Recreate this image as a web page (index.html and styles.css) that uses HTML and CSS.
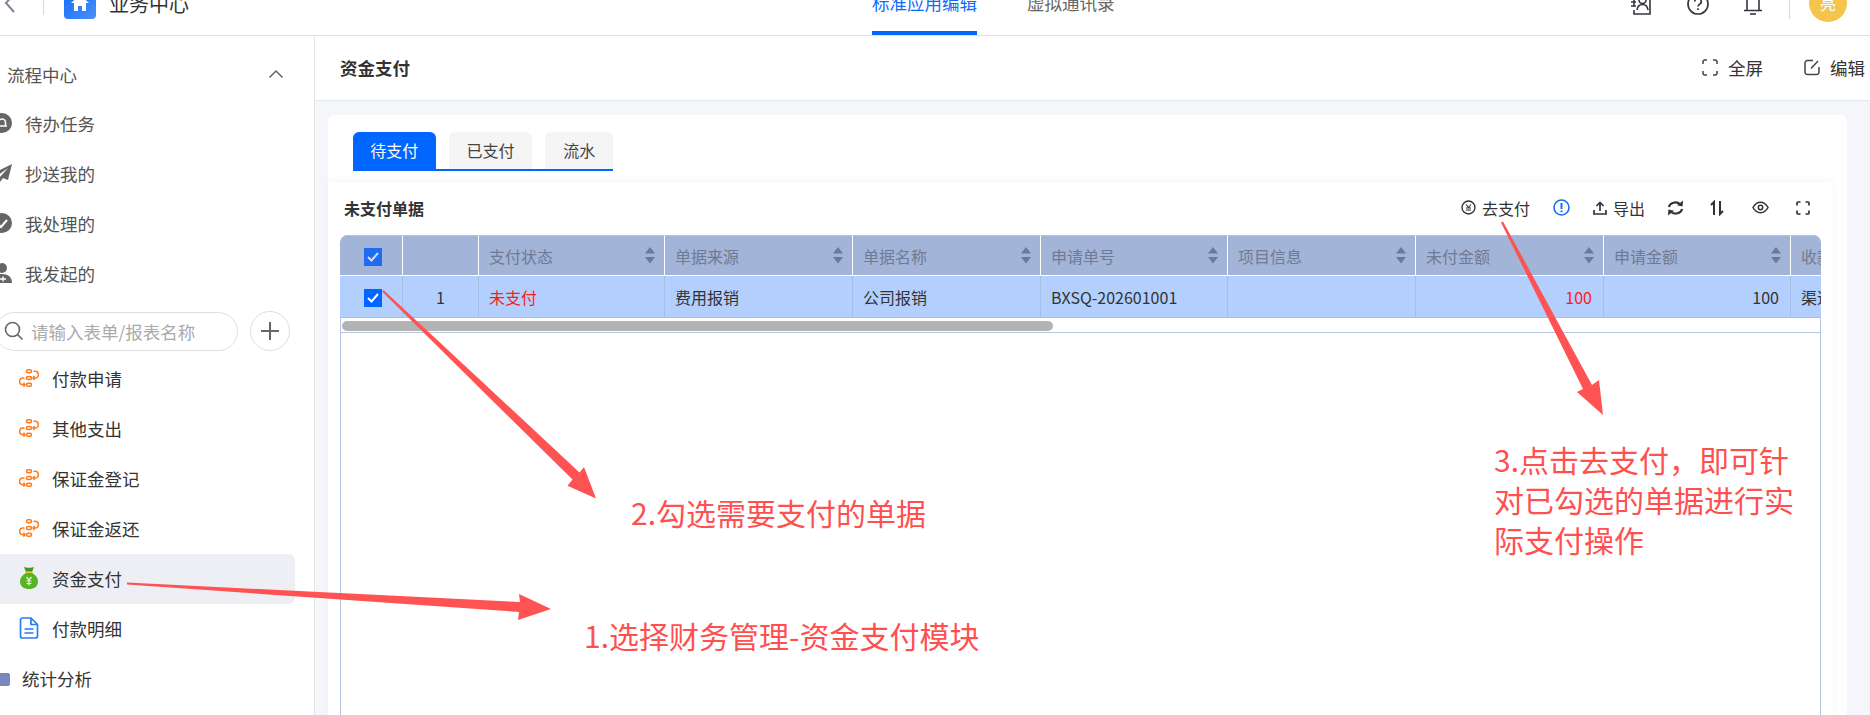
FILE: index.html
```html
<!DOCTYPE html>
<html lang="zh-CN">
<head>
<meta charset="utf-8">
<title>业务中心</title>
<link rel="stylesheet" href="styles.css">
</head>
<body>
<div class="app">
  <header class="topbar">
    <div class="topbar-inner">
      <div class="brand">
        <svg class="back" width="12" height="22" viewBox="0 0 12 22"><path d="M10 2 2 11l8 9" fill="none" stroke="#7d8694" stroke-width="2"/></svg>
        <span class="vline"></span>
        <span class="logo"><svg width="20" height="20" viewBox="0 0 20 20"><path d="M10 2 1 10h3v8h4v-5h4v5h4v-8h3z" fill="#fff"/></svg></span>
        <span class="appname">业务中心</span>
      </div>
      <nav class="toptabs">
        <a class="ttab on">标准应用编辑</a>
        <a class="ttab">虚拟通讯录</a>
      </nav>
      <div class="topright">
        <svg class="ticon" width="22" height="26" viewBox="0 0 22 26" fill="none" stroke="#33373d" stroke-width="1.6"><path d="M4 2h16v22H4v-4M4 6v10"/><path d="M1 8h5M1 12h5M1 16h5"/><circle cx="12.5" cy="10" r="3.5"/><path d="M7 20c.5-4 3-5.5 5.500-5.500s5 1.500 5.500 5.500"/></svg>
        <svg class="ticon q" width="22" height="22" viewBox="0 0 22 22" fill="none" stroke="#33373d" stroke-width="1.7"><circle cx="11" cy="11" r="10"/><path d="M7.800 8.500a3.200 3.200 0 1 1 4.800 2.700c-1 .6-1.600 1.200-1.600 2.400"/><path d="M11 15.200v1.800"/></svg>
        <svg class="ticon bell" width="20" height="24" viewBox="0 0 20 24" fill="none" stroke="#33373d" stroke-width="1.600"><path d="M4 18V8a6 6 0 0 1 12 0v10M1 18.500h18"/><path d="M7 22h6"/></svg>
        <span class="vline right"></span>
        <span class="avatar">亮</span>
      </div>
    </div>
  </header>
  <div class="body">
    <aside class="sidebar">
      <div class="side-inner">
        <div class="side-head"><span>流程中心</span>
          <svg width="16" height="10" viewBox="0 0 16 10"><path d="M1.500 8.500 8 2l6.500 6.500" fill="none" stroke="#666" stroke-width="1.500"/></svg>
        </div>
        <div class="side-row"><svg width="20" height="20" viewBox="0 0 20 20"><circle cx="10" cy="10" r="10" fill="#666"/><path d="M5 13h10M6.500 13V9.500a3.500 3.500 0 0 1 7 0V13" fill="none" stroke="#fff" stroke-width="1.600"/></svg><span>待办任务</span></div>
        <div class="side-row"><svg width="20" height="20" viewBox="0 0 20 20"><path d="M20 1 0 11l5 2 11-8-8 9v5l3-4 5 2z" fill="#666"/></svg><span>抄送我的</span></div>
        <div class="side-row"><svg width="20" height="20" viewBox="0 0 20 20"><circle cx="10" cy="10" r="10" fill="#666"/><path d="M6 11l3 3 6-7" fill="none" stroke="#fff" stroke-width="2"/></svg><span>我处理的</span></div>
        <div class="side-row"><svg width="20" height="20" viewBox="0 0 20 20"><circle cx="10" cy="5" r="5" fill="#666"/><path d="M0 20c0-6 4-9 10-9s10 3 10 9z" fill="#666"/><path d="M8 16h6M11 13.500v5" stroke="#fff" stroke-width="1.400"/></svg><span>我发起的</span></div>
        <div class="search-row">
          <div class="search">
            <svg width="20" height="20" viewBox="0 0 20 20" fill="none" stroke="#666" stroke-width="1.600"><circle cx="8.500" cy="8.500" r="7"/><path d="m13.500 13.500 5 5"/></svg>
            <span>请输入表单/报表名称</span>
          </div>
          <div class="plus"><svg width="20" height="20" viewBox="0 0 20 20"><path d="M10 1v18M1 10h18" stroke="#666" stroke-width="2"/></svg></div>
        </div>
        <div class="menu">
          <div class="item"><svg class="flow" width="20" height="18" viewBox="0 0 20 18"><rect x="7.500" y=".8" width="5" height="3" rx="1.500"/><rect x="7.500" y="7.500" width="5" height="3" rx="1.500"/><rect x="7.500" y="14.200" width="5" height="3" rx="1.500"/><path d="M14.500 2.300h1.500a3.300 3.300 0 0 1 0 6.700h-1.500M15.500 7l-1.500 2 1.500 2"/><path d="M5.500 9H4a3.300 3.300 0 0 0 0 6.700h1.500M4.500 13.700l1.500 2-1.500 2"/></svg><span>付款申请</span></div>
          <div class="item"><svg class="flow" width="20" height="18" viewBox="0 0 20 18"><rect x="7.500" y=".8" width="5" height="3" rx="1.500"/><rect x="7.500" y="7.500" width="5" height="3" rx="1.500"/><rect x="7.500" y="14.200" width="5" height="3" rx="1.500"/><path d="M14.500 2.300h1.500a3.300 3.300 0 0 1 0 6.700h-1.500M15.500 7l-1.500 2 1.500 2"/><path d="M5.500 9H4a3.300 3.300 0 0 0 0 6.700h1.500M4.500 13.700l1.500 2-1.500 2"/></svg><span>其他支出</span></div>
          <div class="item"><svg class="flow" width="20" height="18" viewBox="0 0 20 18"><rect x="7.500" y=".8" width="5" height="3" rx="1.500"/><rect x="7.500" y="7.500" width="5" height="3" rx="1.500"/><rect x="7.500" y="14.200" width="5" height="3" rx="1.500"/><path d="M14.500 2.300h1.500a3.300 3.300 0 0 1 0 6.700h-1.500M15.500 7l-1.500 2 1.500 2"/><path d="M5.500 9H4a3.300 3.300 0 0 0 0 6.700h1.500M4.500 13.700l1.500 2-1.500 2"/></svg><span>保证金登记</span></div>
          <div class="item"><svg class="flow" width="20" height="18" viewBox="0 0 20 18"><rect x="7.500" y=".8" width="5" height="3" rx="1.500"/><rect x="7.500" y="7.500" width="5" height="3" rx="1.500"/><rect x="7.500" y="14.200" width="5" height="3" rx="1.500"/><path d="M14.500 2.300h1.500a3.300 3.300 0 0 1 0 6.700h-1.500M15.500 7l-1.500 2 1.500 2"/><path d="M5.500 9H4a3.300 3.300 0 0 0 0 6.700h1.500M4.500 13.700l1.500 2-1.500 2"/></svg><span>保证金返还</span></div>
          <div class="item active"><svg width="20" height="22" viewBox="0 0 20 22"><path d="M5 0c2 1 8 1 10 0l-2 5H7z" fill="#3f9a1d"/><rect x="6" y="4.500" width="8" height="1.800" fill="#e6c94a"/><path d="M7 6h6c4 2 6 5 6 8.500 0 5-4 7.500-9 7.500s-9-2.500-9-7.500C1 11 3 8 7 6z" fill="#56b423"/><path d="M7.500 10 10 13l2.500-3M7.500 14h5M7.500 16.500h5M10 13v5.500" fill="none" stroke="#e8f6d8" stroke-width="1.200"/></svg><span>资金支付</span></div>
          <div class="item"><svg width="20" height="22" viewBox="0 0 20 22" fill="none" stroke="#2b7bf2" stroke-width="1.700"><path d="M3.500 1H12l6.500 6.500V19a2 2 0 0 1-2 2h-13a2 2 0 0 1-2-2V3a2 2 0 0 1 2-2z"/><path d="M12 1v6.500h6.500M5.500 12h9M5.500 16h9"/></svg><span>付款明细</span></div>
        </div>
        <div class="side-foot"><svg width="20" height="16" viewBox="0 0 20 16"><path d="M2 1h6l2 2h8a2 2 0 0 1 2 2v9a2 2 0 0 1-2 2H2a2 2 0 0 1-2-2V3a2 2 0 0 1 2-2z" fill="#7688bd"/></svg><span>统计分析</span></div>
      </div>
    </aside>
    <main class="main">
      <div class="page-head">
        <h1>资金支付</h1>
        <div class="page-actions">
          <span class="act"><svg width="16" height="17" viewBox="0 0 16 17" fill="none" stroke="#444" stroke-width="1.500"><path d="M1 5V3a2 2 0 0 1 2-2h2M11 1h2a2 2 0 0 1 2 2v2M15 12v2a2 2 0 0 1-2 2h-2M5 16H3a2 2 0 0 1-2-2v-2"/></svg>全屏</span>
          <span class="act"><svg width="16" height="17" viewBox="0 0 16 17" fill="none" stroke="#444" stroke-width="1.500"><path d="M9 1.500H3.500a2.500 2.500 0 0 0-2.500 2.500v9a2.500 2.500 0 0 0 2.500 2.500h9a2.500 2.500 0 0 0 2.500-2.500V8"/><path d="m7 9.500 7-7.500"/></svg>编辑</span>
        </div>
      </div>
      <section class="panel">
        <div class="tabs">
          <a class="tab on">待支付</a>
          <a class="tab">已支付</a>
          <a class="tab">流水</a>
        </div>
        <div class="card">
          <div class="toolbar">
            <h2>未支付单据</h2>
            <div class="tools">
              <span class="tool"><svg width="15" height="15" viewBox="0 0 15 15" fill="none" stroke="#333" stroke-width="1.400"><circle cx="7.500" cy="7.500" r="6.500"/><path d="M5 4.500l2.500 3 2.500-3M5 8h5M5 10h5" stroke-width="1.100"/></svg>去支付</span>
              <svg width="17" height="17" viewBox="0 0 17 17" fill="none" stroke="#1a6ff0" stroke-width="1.600"><circle cx="8.500" cy="8.500" r="7.500"/><path d="M8.500 4v6M8.500 11.500v1.800" stroke-width="2"/></svg>
              <span class="tool"><svg width="14" height="14" viewBox="0 0 14 14" fill="none" stroke="#333" stroke-width="1.700"><path d="M7 10V1.500M3.500 5 7 1.500 10.500 5M1 9v4h12V9"/></svg>导出</span>
              <svg class="t-ref" width="17" height="16" viewBox="0 0 18 16" fill="none" stroke="#333" stroke-width="2.200"><path d="M2 7a7 6 0 0 1 12-3M16 9a7 6 0 0 1-12 3"/><path d="m17 0-.5 6.500-6-1.500zM1 16l.5-6.500 6 1.500z" fill="#333" stroke="none"/></svg>
              <svg class="t-sort" width="14" height="16" viewBox="0 0 14 16" fill="none" stroke="#333" stroke-width="2"><path d="M4 15V2L1 5M10 1v13l3-3"/></svg>
              <svg class="t-eye" width="17" height="13" viewBox="0 0 18 13" fill="none" stroke="#333" stroke-width="1.600"><path d="M1 6.500C3 3 5.500 1 9 1s6 2 8 5.500C15 10 12.500 12 9 12S3 10 1 6.500z"/><circle cx="9" cy="6.500" r="2.300"/></svg>
              <svg class="t-full" width="14" height="14" viewBox="0 0 14 14" fill="none" stroke="#333" stroke-width="1.700"><path d="M1 4.500V2a1 1 0 0 1 1-1h2.500M9.500 1H12a1 1 0 0 1 1 1v2.500M13 9.500V12a1 1 0 0 1-1 1H9.500M4.500 13H2a1 1 0 0 1-1-1V9.500"/></svg>
            </div>
          </div>
          <div class="grid-wrap">
            <div class="grid">
              <div class="hc center chk"><span class="cb dim"><svg width="14" height="12" viewBox="0 0 14 12"><path d="m2 6 3.500 3.500L12 2" fill="none" stroke="#cfdcff" stroke-width="2"/></svg></span></div>
              <div class="hc"></div>
              <div class="hc"><span>支付状态</span><svg class="sort" width="10" height="17" viewBox="0 0 10 17"><path d="M5 0l5 6.500H0zM0 10h10l-5 6.500z"/></svg></div>
              <div class="hc"><span>单据来源</span><svg class="sort" width="10" height="17" viewBox="0 0 10 17"><path d="M5 0l5 6.500H0zM0 10h10l-5 6.500z"/></svg></div>
              <div class="hc"><span>单据名称</span><svg class="sort" width="10" height="17" viewBox="0 0 10 17"><path d="M5 0l5 6.500H0zM0 10h10l-5 6.500z"/></svg></div>
              <div class="hc"><span>申请单号</span><svg class="sort" width="10" height="17" viewBox="0 0 10 17"><path d="M5 0l5 6.500H0zM0 10h10l-5 6.500z"/></svg></div>
              <div class="hc"><span>项目信息</span><svg class="sort" width="10" height="17" viewBox="0 0 10 17"><path d="M5 0l5 6.500H0zM0 10h10l-5 6.500z"/></svg></div>
              <div class="hc"><span>未付金额</span><svg class="sort" width="10" height="17" viewBox="0 0 10 17"><path d="M5 0l5 6.500H0zM0 10h10l-5 6.500z"/></svg></div>
              <div class="hc"><span>申请金额</span><svg class="sort" width="10" height="17" viewBox="0 0 10 17"><path d="M5 0l5 6.500H0zM0 10h10l-5 6.500z"/></svg></div>
              <div class="hc"><span>收款</span></div>

              <div class="dc center chk"><span class="cb"><svg width="14" height="12" viewBox="0 0 14 12"><path d="m2 6 3.500 3.500L12 2" fill="none" stroke="#fff" stroke-width="2"/></svg></span></div>
              <div class="dc center">1</div>
              <div class="dc red">未支付</div>
              <div class="dc">费用报销</div>
              <div class="dc">公司报销</div>
              <div class="dc">BXSQ-202601001</div>
              <div class="dc"></div>
              <div class="dc num red">100</div>
              <div class="dc num">100</div>
              <div class="dc">渠道</div>
            </div>
            <div class="hscroll"><div class="thumb"></div></div>
            <div class="grid-body"></div>
          </div>
        </div>
      </section>
    </main>
  </div>
  <svg class="arrows" width="1870" height="715" viewBox="0 0 1870 715">
    <polygon points="127,582.500 520,602 519,594 551,609 518,620 519,612 127,584.500"/>
    <polygon points="383.500,290 579.500,472.400 584,467 596,498.500 567.500,485.700 572.500,479.600 382,291.500"/>
    <polygon points="1503,221.500 1592,385 1599,380 1603,415 1577,392 1583,389 1501,222.500"/>
  </svg>
  <div class="note n1">1.选择财务管理-资金支付模块</div>
  <div class="note n2">2.勾选需要支付的单据</div>
  <div class="note n3">3.点击去支付，即可针对已勾选的单据进行实际支付操作</div>
</div>
</body>
</html>
```
FILE: styles.css
```css
* { box-sizing: border-box; }
html, body { margin: 0; padding: 0; }
body {
  width: 1870px;
  height: 715px;
  overflow: hidden;
  background: #fff;
  color: #333;
  font-family: "Noto Sans CJK SC", "Liberation Sans", sans-serif;
  font-size: 16px;
}
.app { position: relative; width: 1870px; height: 715px; display: flex; flex-direction: column; overflow: hidden; }

/* top bar: the screenshot cuts its upper part off */
.topbar { height: 36px; flex: none; border-bottom: 1px solid #e1e1e1; overflow: hidden; }
.topbar-inner { height: 64px; margin-top: -29px; display: flex; align-items: center; }
.brand { width: 872px; flex: none; display: flex; align-items: center; padding-left: 4px; }
.back { flex: none; margin-right: 27px; }
.vline { display: block; width: 1px; height: 24px; background: #d8d8d8; }
.vline.right { margin: 0 19px 0 0; height: 32px; }
.logo { width: 32px; height: 32px; margin-left: 20px; border-radius: 4px; background: linear-gradient(135deg, #0f6bff, #4a90f5); display: flex; align-items: center; justify-content: center; }
.appname { margin-left: 13px; font-size: 20px; color: #333; }
.toptabs { display: flex; gap: 50px; align-self: stretch; }
.ttab { display: block; height: 64px; line-height: 64px; font-size: 17.5px; color: #666; border-bottom: 4px solid transparent; white-space: nowrap; }
.ttab.on { color: #0f6bff; border-bottom-color: #0066ff; }
.topright { margin-left: auto; padding-right: 23px; display: flex; align-items: center; }
.ticon { margin-right: 35px; flex: none; }
.ticon.q { margin-top: 2px; margin-right: 34px; }
.ticon.bell { margin-top: 2px; margin-right: 26px; }
.avatar { width: 38px; height: 38px; border-radius: 50%; background: #f4c54a; color: #fff; font-size: 16px; display: flex; align-items: center; justify-content: center; }

.body { flex: 1; display: flex; min-height: 0; }

/* sidebar: the screenshot cuts off its left edge */
.sidebar { width: 315px; flex: none; border-right: 1px solid #e3e4e8; overflow: hidden; }
.side-inner { margin-left: -14px; margin-top: 13px; }
.side-head { height: 50px; display: flex; align-items: center; justify-content: space-between; padding: 0 30px 0 21px; font-size: 17.500px; color: #555; }
.side-row { height: 50px; display: flex; align-items: center; gap: 13px; padding: 0 0 2px 6px; font-size: 17.500px; color: #555; }
.side-row svg { flex: none; }
.search-row { display: flex; align-items: center; gap: 12px; margin: 12px 0 3px 9px; }
.search { width: 243px; height: 39px; border: 1px solid #dedede; border-radius: 20px; display: flex; align-items: center; gap: 7px; padding-left: 8px; color: #aaa; font-size: 17.500px; white-space: nowrap; }
.search svg { flex: none; }
.plus { width: 40px; height: 40px; border: 1px solid #dedede; border-radius: 50%; display: flex; align-items: center; justify-content: center; }
.menu { display: flex; flex-direction: column; }
.item { height: 50px; width: 309px; display: flex; align-items: center; gap: 13px; padding: 0 0 2px 33px; border-radius: 6px; font-size: 17.500px; color: #333; }
.item svg { flex: none; }
.item.active { background: #eeeff4; }
.flow { fill: none; stroke: #ff7a1a; stroke-width: 1.500; }
.side-foot { height: 50px; display: flex; align-items: center; gap: 12px; padding: 0 0 2px 4px; font-size: 17.500px; color: #333; }

/* main */
.main { flex: 1; min-width: 0; background: #f5f6fa; display: flex; flex-direction: column; overflow: hidden; }
.page-head { height: 65px; flex: none; background: #fff; border-bottom: 1px solid #e5e7ee; display: flex; align-items: center; justify-content: space-between; padding: 0 5px 2px 25px; }
.page-head h1 { margin: 0; font-size: 17.500px; font-weight: 700; color: #333; }
.page-actions { display: flex; gap: 41px; }
.act { display: flex; align-items: center; gap: 10px; font-size: 17.500px; color: #333; }
.panel { flex: 1; margin: 14px 23px 0 13px; padding-top: 17px; background: #fff; border-radius: 6px 6px 0 0; display: flex; flex-direction: column; min-height: 0; }
.tabs { display: flex; gap: 13px; margin-left: 25px; width: 260px; height: 39px; border-bottom: 2px solid #0066ff; flex: none; }
.tab { height: 37px; padding: 0; line-height: 37px; text-align: center; background: #f5f5f5; border-radius: 6px 6px 0 0; font-size: 16px; color: #444; width: 84px; }
.tab.on { background: #0066ff; color: #fff; width: 83px; height: 38px; }
.tab:last-child { width: 68px; }
.card { flex: 1; margin: 11px 14px 0 0; padding: 0 12px; background: #fff; border-radius: 6px 6px 0 0; box-shadow: 0 -2px 8px rgba(0, 0, 0, .04); display: flex; flex-direction: column; min-height: 0; }
.toolbar { height: 53px; flex: none; display: flex; align-items: center; justify-content: space-between; padding: 0 11px 2px 4px; }
.toolbar h2 { margin: 0; font-size: 16px; font-weight: 700; color: #333; }
.tools { display: flex; align-items: center; gap: 23px; }
.tool { display: flex; align-items: center; gap: 6px; font-size: 16px; color: #333; }
.tools > svg { flex: none; }
.tools > .t-ref { margin-left: -1px; }
.tools > .t-sort { margin-left: 3px; }
.tools > .t-eye { margin-left: 5px; }
.tools > .t-full { margin-left: 4px; }

.grid-wrap { flex: 1; display: flex; flex-direction: column; width: 1481px; min-height: 0; overflow: hidden; border-radius: 8px 8px 0 0; }
.grid { display: grid; grid-template-columns: 63px 76px 186px 188px 188px 187px 188px 188px 187px 60px; grid-template-rows: 41px 42px; flex: none; }
.hc { background: #a2b4d7; border-top: 1px solid #b5c3de; border-right: 1px solid #fff; border-bottom: 1px solid #fff; display: flex; align-items: center; justify-content: space-between; padding: 0 9px 0 10px; color: #6f7b93; font-size: 16px; white-space: nowrap; }
.dc { background: #b3cffe; border-right: 1px solid #a6bfe8; border-bottom: 1px solid #a6bfe8; display: flex; align-items: center; padding: 0 10px; font-size: 16px; color: #333; white-space: nowrap; overflow: hidden; }
.hc.center, .dc.center { justify-content: center; padding: 0; }
.hc.chk, .dc.chk { padding: 3px 0 0 3px; }
.dc.num { justify-content: flex-end; padding-right: 11px; }
.dc.red { color: #ff1a1a; }
.sort { fill: #6c7a96; flex: none; }
.cb { width: 18px; height: 18px; background: #0066ff; display: flex; align-items: center; justify-content: center; }
.cb.dim { background: #1f6cf2; }
.hscroll { height: 15px; flex: none; padding: 3px 0 0 1px; background: #fff; border-left: 1px solid #b8c5e0; border-right: 1px solid #b8c5e0; border-bottom: 1px solid #b8c5e0; }
.thumb { width: 711px; height: 10px; background: #b3b3b3; border-radius: 5px; }
.grid-body { flex: 1; background: #fff; border-left: 1px solid #b8c5e0; border-right: 1px solid #b8c5e0; }

/* annotations over the screenshot */
.arrows { position: absolute; left: 0; top: 0; pointer-events: none; }
.arrows polygon { fill: #ff5252; }
.note { position: absolute; color: #ff5050; font-size: 30px; line-height: 40px; white-space: nowrap; }
.n1 { left: 584px; top: 615px; }
.n2 { left: 631px; top: 492px; }
.n3 { left: 1494px; top: 439px; width: 310px; white-space: normal; }
```
